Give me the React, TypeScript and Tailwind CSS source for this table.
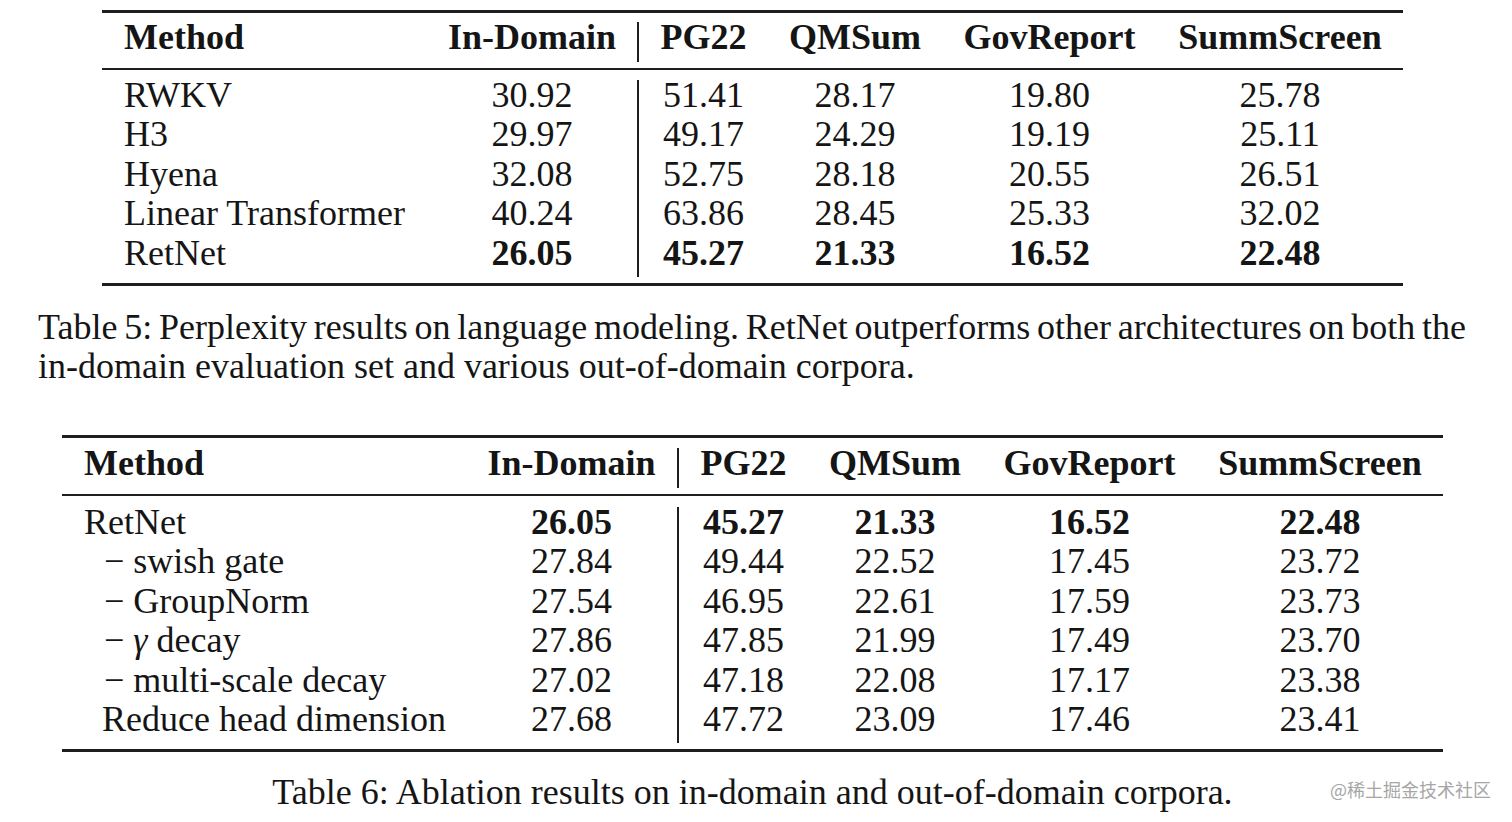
import React from "react";

type Row = { method: React.ReactNode; indent?: number; vals: string[]; bold?: boolean };

const headers = ["In-Domain", "PG22", "QMSum", "GovReport", "SummScreen"];

const table5: Row[] = [
  { method: "RWKV", vals: ["30.92", "51.41", "28.17", "19.80", "25.78"] },
  { method: "H3", vals: ["29.97", "49.17", "24.29", "19.19", "25.11"] },
  { method: "Hyena", vals: ["32.08", "52.75", "28.18", "20.55", "26.51"] },
  { method: "Linear Transformer", vals: ["40.24", "63.86", "28.45", "25.33", "32.02"] },
  { method: "RetNet", vals: ["26.05", "45.27", "21.33", "16.52", "22.48"], bold: true },
];

const table6: Row[] = [
  { method: "RetNet", vals: ["26.05", "45.27", "21.33", "16.52", "22.48"], bold: true },
  { method: "\u2212 swish gate", indent: 20, vals: ["27.84", "49.44", "22.52", "17.45", "23.72"] },
  { method: "\u2212 GroupNorm", indent: 20, vals: ["27.54", "46.95", "22.61", "17.59", "23.73"] },
  {
    method: (
      <>
        {"\u2212 "}
        <i>γ</i>
        {" decay"}
      </>
    ),
    indent: 20,
    vals: ["27.86", "47.85", "21.99", "17.49", "23.70"],
  },
  { method: "\u2212 multi-scale decay", indent: 20, vals: ["27.02", "47.18", "22.08", "17.17", "23.38"] },
  { method: "Reduce head dimension", indent: 18, vals: ["27.68", "47.72", "23.09", "17.46", "23.41"] },
];

function Table({
  rows,
  gridClass,
  headerGap,
  bodyGap,
}: {
  rows: Row[];
  gridClass: string;
  headerGap: string;
  bodyGap: string;
}) {
  return (
    <div className="flex flex-col">
      <div className="h-[3px] bg-[#1e1e1e]" />
      <div className={`grid ${gridClass} ${headerGap} font-bold`}>
        <div className="h-[40px] leading-[31.5px] pl-[22px] text-left">Method</div>
        {headers.map((h, i) => (
          <div
            key={h}
            className={
              i === 1
                ? "h-[40px] leading-[31.5px] text-center border-l-2 border-[#1e1e1e]"
                : "h-[40px] leading-[31.5px] text-center"
            }
          >
            {h}
          </div>
        ))}
      </div>
      <div className="mt-[6px] h-[2px] bg-[#1e1e1e]" />
      <div className={`flex flex-col ${bodyGap}`}>
        {rows.map((r, ri) => (
          <div key={ri} className={`grid ${gridClass}`}>
            <div className="h-[39.4px] leading-[31.5px] pl-[22px] text-left whitespace-nowrap">
              <span style={{ paddingLeft: r.indent ?? 0 }}>{r.method}</span>
            </div>
            {r.vals.map((v, i) => (
              <div
                key={i}
                className={
                  (i === 1
                    ? "h-[39.4px] leading-[31.5px] text-center border-l-2 border-[#1e1e1e]"
                    : "h-[39.4px] leading-[31.5px] text-center") + (r.bold ? " font-bold" : "")
                }
              >
                {v}
              </div>
            ))}
          </div>
        ))}
      </div>
      <div className="mt-[6px] h-[3px] bg-[#1e1e1e]" />
    </div>
  );
}

export default function App() {
  return (
    <div
      className="relative w-[1512px] h-[822px] overflow-hidden bg-white text-[#151515] text-[36px]"
      style={{ fontFamily: '"Liberation Serif", "Times New Roman", serif' }}
    >
      <div className="flex flex-col">
        <div className="mt-[10px] ml-[102px] w-[1301px]">
          <Table
            rows={table5}
            gridClass="grid-cols-[325px_210px_131px_174px_215px_246px]"
            headerGap="mt-[9px]"
            bodyGap="mt-[10px]"
          />
        </div>
        <div className="mt-[22px] ml-[38px] w-[1428px] leading-[39.5px]">
          <div className="text-justify [text-align-last:justify] [word-spacing:-3px]">
            Table 5: Perplexity results on language modeling. RetNet outperforms other architectures on both the
          </div>
          <div>in-domain evaluation set and various out-of-domain corpora.</div>
        </div>
        <div className="mt-[48px] ml-[62px] w-[1381px]">
          <Table
            rows={table6}
            gridClass="grid-cols-[404px_211px_131px_174px_215px_246px]"
            headerGap="mt-[10px]"
            bodyGap="mt-[11px]"
          />
          <div className="mt-[21px] leading-[39.5px] text-center">
            Table 6: Ablation results on in-domain and out-of-domain corpora.
          </div>
        </div>
      </div>
      <div
        className="absolute left-[1330px] top-[777px] text-[18px] leading-[24px] text-[#a6a6a6]"
        style={{ fontFamily: '"Noto Sans CJK SC", "Noto Sans", sans-serif' }}
      >
        @稀土掘金技术社区
      </div>
    </div>
  );
}
